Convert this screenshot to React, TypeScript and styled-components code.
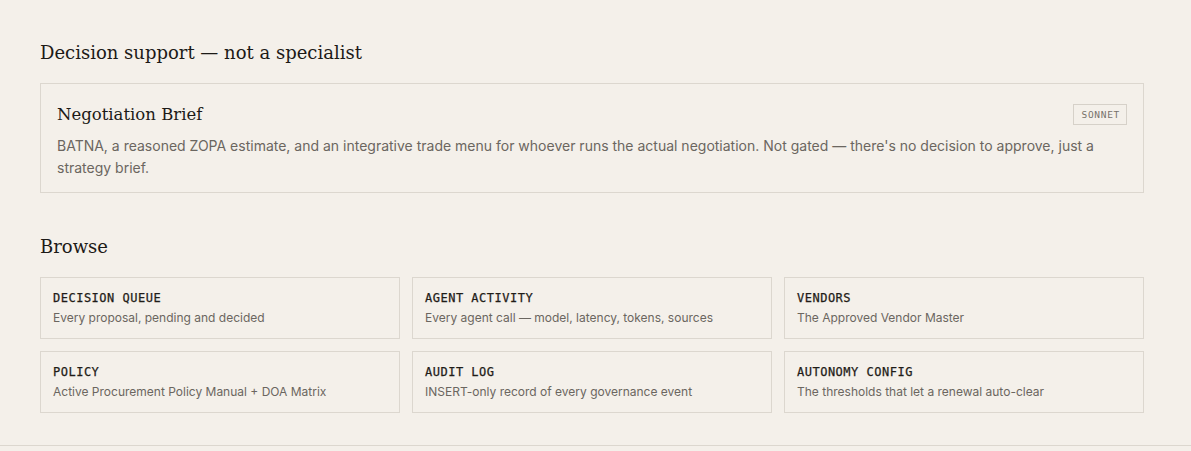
import React from 'react';
import styled, { createGlobalStyle } from 'styled-components';

const GlobalStyle = createGlobalStyle`
  html, body {
    margin: 0;
    padding: 0;
    background: #f4f0ea;
  }
  body {
    font-family: Inter, "Noto Sans", sans-serif;
    color: #1c1a17;
  }
`;

const Page = styled.main`
  padding: 39px 47px 32px 40px;
  border-bottom: 1px solid #dcd7cf;
`;

const Section = styled.section`
  & + & {
    margin-top: 40px;
  }
`;

const SectionTitle = styled.h2`
  font-family: "DejaVu Serif", "Liberation Serif", serif;
  font-weight: 400;
  font-size: 18px;
  line-height: 28px;
  margin: 0 0 16px 0;
  color: #1c1a17;
`;

const FeatureCard = styled.div`
  border: 1px solid #dcd7cf;
  padding: 18px 16px 13px 16px;
`;

const FeatureHead = styled.div`
  display: flex;
  align-items: flex-start;
  justify-content: space-between;
`;

const FeatureTitle = styled.h3`
  font-family: "DejaVu Serif", "Liberation Serif", serif;
  font-weight: 400;
  font-size: 16.5px;
  line-height: 26px;
  margin: 0 0 7px 0;
`;

const Badge = styled.span`
  font-family: "DejaVu Sans Mono", "Liberation Mono", monospace;
  font-size: 9.5px;
  line-height: 13px;
  letter-spacing: 0.7px;
  color: #77726b;
  border: 1px solid #d6d1c9;
  padding: 3px 6px 3px 7px;
  margin-top: 2px;
`;

const FeatureText = styled.p`
  margin: 0;
  font-size: 14px;
  line-height: 22px;
  color: #6b6660;
`;

const Grid = styled.div`
  display: grid;
  grid-template-columns: repeat(3, 1fr);
  gap: 12px;
`;

const LinkCard = styled.a`
  display: block;
  border: 1px solid #dcd7cf;
  padding: 13px 12px 12px 12px;
  text-decoration: none;
`;

const LinkLabel = styled.div`
  font-family: "DejaVu Sans Mono", "Liberation Mono", monospace;
  font-size: 12px;
  font-weight: 400;
  letter-spacing: 0.5px;
  line-height: 14px;
  color: #1f1c18;
  -webkit-text-stroke: 0.25px #1f1c18;
`;

const LinkDesc = styled.div`
  margin-top: 5px;
  font-size: 12px;
  line-height: 16px;
  color: #6b6660;
`;

const links = [
  { label: 'DECISION QUEUE', desc: 'Every proposal, pending and decided' },
  { label: 'AGENT ACTIVITY', desc: 'Every agent call — model, latency, tokens, sources' },
  { label: 'VENDORS', desc: 'The Approved Vendor Master' },
  { label: 'POLICY', desc: 'Active Procurement Policy Manual + DOA Matrix' },
  { label: 'AUDIT LOG', desc: 'INSERT-only record of every governance event' },
  { label: 'AUTONOMY CONFIG', desc: 'The thresholds that let a renewal auto-clear' },
];

export default function App() {
  return (
    <>
      <GlobalStyle />
      <Page>
        <Section>
          <SectionTitle>Decision support — not a specialist</SectionTitle>
          <FeatureCard>
            <FeatureHead>
              <FeatureTitle>Negotiation Brief</FeatureTitle>
              <Badge>SONNET</Badge>
            </FeatureHead>
            <FeatureText>
              BATNA, a reasoned ZOPA estimate, and an integrative trade menu for whoever runs the actual
              negotiation. Not gated — there's no decision to approve, just a strategy brief.
            </FeatureText>
          </FeatureCard>
        </Section>
        <Section>
          <SectionTitle>Browse</SectionTitle>
          <Grid>
            {links.map(l => (
              <LinkCard key={l.label} href="#">
                <LinkLabel>{l.label}</LinkLabel>
                <LinkDesc>{l.desc}</LinkDesc>
              </LinkCard>
            ))}
          </Grid>
        </Section>
      </Page>
    </>
  );
}
